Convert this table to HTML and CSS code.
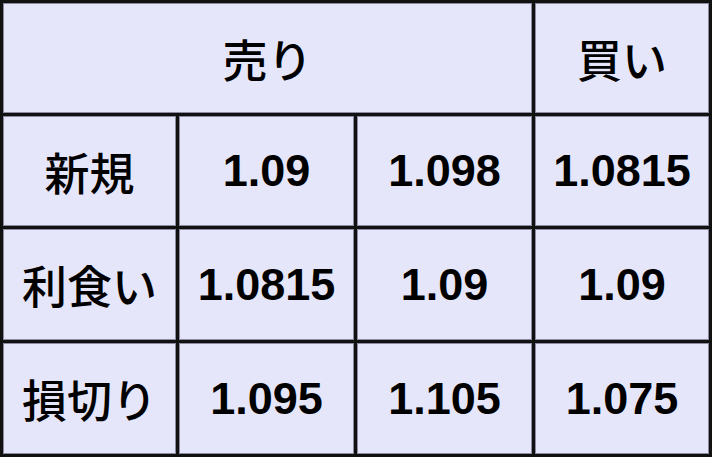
FILE: index.html
```html
<!DOCTYPE html>
<html lang="ja">
<head>
<meta charset="utf-8">
<link rel="stylesheet" href="styles.css">
</head>
<body>
<div class="grid">
  <div class="cell head span3">売り</div>
  <div class="cell head">買い</div>

  <div class="cell label">新規</div>
  <div class="cell num">1.09</div>
  <div class="cell num">1.098</div>
  <div class="cell num">1.0815</div>

  <div class="cell label">利食い</div>
  <div class="cell num">1.0815</div>
  <div class="cell num">1.09</div>
  <div class="cell num">1.09</div>

  <div class="cell label">損切り</div>
  <div class="cell num">1.095</div>
  <div class="cell num">1.105</div>
  <div class="cell num">1.075</div>
</div>
</body>
</html>
```
FILE: styles.css
```css
html, body {
  margin: 0;
  padding: 0;
  background: #e6e6fa;
}
.grid {
  width: 712px;
  height: 457px;
  box-sizing: border-box;
  display: grid;
  grid-template-columns: 173px 175px 175px 174px;
  grid-template-rows: 110px 110px 111px 111px;
  gap: 3px;
  padding: 3px;
  background: #111;
}
.cell {
  background: #e6e6fa;
  display: flex;
  align-items: center;
  justify-content: center;
  color: #000;
  box-shadow: inset 0 0 0 1px #8a8aa0;
}
.span3 {
  grid-column: span 3;
}
.head, .label {
  font-family: "Noto Sans CJK JP", sans-serif;
  font-weight: 500;
  font-size: 45px;
}
.num {
  font-family: "Liberation Sans", Arial, sans-serif;
  font-weight: 700;
  font-size: 45px;
}
```
